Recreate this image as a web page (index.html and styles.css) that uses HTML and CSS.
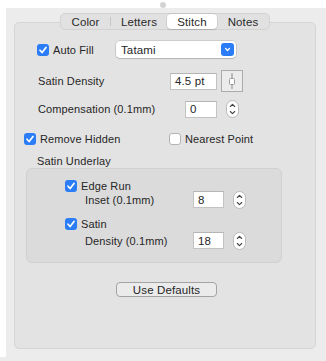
FILE: index.html
```html
<!DOCTYPE html>
<html>
<head>
<meta charset="utf-8">
<link rel="stylesheet" href="styles.css">
</head>
<body>
<div class="window">
  <div class="topbar"><span class="knob"></span></div>
  <div class="main">
    <div class="leftstrip"></div>
    <div class="content">
      <div class="tabs">
        <div class="seg seg-color">Color</div>
        <div class="sep"></div>
        <div class="seg seg-letters">Letters</div>
        <div class="seg seg-stitch active">Stitch</div>
        <div class="seg seg-notes">Notes</div>
      </div>
      <div class="box">
        <div class="row row-autofill">
          <div class="cbwrap w-autofill">
            <svg class="cb" width="12" height="12" viewBox="0 0 12 12"><rect width="12" height="12" rx="3" fill="#2b7df7"/><path d="M3 6.2 L5.1 8.5 L9 3.5" fill="none" stroke="#fff" stroke-width="1.7" stroke-linecap="round" stroke-linejoin="round"/></svg>
            <span class="lbl">Auto Fill</span>
          </div>
          <div class="popup">
            <span class="popup-text">Tatami</span>
            <span class="popup-btn"><svg width="13" height="13" viewBox="0 0 13 13"><rect width="13" height="13" rx="3" fill="#2b7df7"/><path d="M4.6 5.6 L6.5 7.4 L8.4 5.6" fill="none" stroke="#fff" stroke-width="1.4" stroke-linecap="round" stroke-linejoin="round"/></svg></span>
          </div>
        </div>

        <div class="row row-density">
          <span class="lbl lbl-density">Satin Density</span>
          <div class="field f-density">4.5 pt</div>
          <div class="slider-btn"><svg width="20" height="20" viewBox="0 0 20 20"><line x1="10" y1="2" x2="10" y2="18" stroke="#8a8a8a" stroke-width="1"/><rect x="7.5" y="7.5" width="5" height="6" rx="1" fill="#fff" stroke="#9a9a9a" stroke-width="1"/></svg></div>
        </div>

        <div class="row row-comp">
          <span class="lbl lbl-comp">Compensation (0.1mm)</span>
          <div class="field f-comp">0</div>
          <svg class="stepper st-comp" width="13" height="18" viewBox="0 0 13 18"><rect x="0.5" y="0.5" width="12" height="17" rx="6" fill="#fff" stroke="#b9b9b9"/><path d="M4.3 6.5 L6.5 4.3 L8.7 6.5" fill="none" stroke="#444" stroke-width="1.1" stroke-linecap="round" stroke-linejoin="round"/><path d="M4.3 11.5 L6.5 13.7 L8.7 11.5" fill="none" stroke="#444" stroke-width="1.1" stroke-linecap="round" stroke-linejoin="round"/></svg>
        </div>

        <div class="row row-checks">
          <div class="cbwrap w-remove">
            <svg class="cb" width="12" height="12" viewBox="0 0 12 12"><rect width="12" height="12" rx="3" fill="#2b7df7"/><path d="M3 6.2 L5.1 8.5 L9 3.5" fill="none" stroke="#fff" stroke-width="1.7" stroke-linecap="round" stroke-linejoin="round"/></svg>
            <span class="lbl">Remove Hidden</span>
          </div>
          <div class="cbwrap">
            <svg class="cb" width="12" height="12" viewBox="0 0 12 12"><rect x="0.5" y="0.5" width="11" height="11" rx="2.5" fill="#fff" stroke="#b3b3b3"/></svg>
            <span class="lbl">Nearest Point</span>
          </div>
        </div>

        <div class="underlay-label">Satin Underlay</div>

        <div class="group">
          <div class="row g-check">
            <svg class="cb" width="12" height="12" viewBox="0 0 12 12"><rect width="12" height="12" rx="3" fill="#2b7df7"/><path d="M3 6.2 L5.1 8.5 L9 3.5" fill="none" stroke="#fff" stroke-width="1.7" stroke-linecap="round" stroke-linejoin="round"/></svg>
            <span class="lbl">Edge Run</span>
          </div>
          <div class="row g-field">
            <span class="lbl g-lbl">Inset (0.1mm)</span>
            <div class="field f-small">8</div>
            <svg class="stepper" width="13" height="18" viewBox="0 0 13 18"><rect x="0.5" y="0.5" width="12" height="17" rx="6" fill="#fff" stroke="#b9b9b9"/><path d="M4.3 6.5 L6.5 4.3 L8.7 6.5" fill="none" stroke="#444" stroke-width="1.1" stroke-linecap="round" stroke-linejoin="round"/><path d="M4.3 11.5 L6.5 13.7 L8.7 11.5" fill="none" stroke="#444" stroke-width="1.1" stroke-linecap="round" stroke-linejoin="round"/></svg>
          </div>
          <div class="row g-check g-check2">
            <svg class="cb" width="12" height="12" viewBox="0 0 12 12"><rect width="12" height="12" rx="3" fill="#2b7df7"/><path d="M3 6.2 L5.1 8.5 L9 3.5" fill="none" stroke="#fff" stroke-width="1.7" stroke-linecap="round" stroke-linejoin="round"/></svg>
            <span class="lbl">Satin</span>
          </div>
          <div class="row g-field g-field2">
            <span class="lbl g-lbl">Density (0.1mm)</span>
            <div class="field f-small">18</div>
            <svg class="stepper" width="13" height="18" viewBox="0 0 13 18"><rect x="0.5" y="0.5" width="12" height="17" rx="6" fill="#fff" stroke="#b9b9b9"/><path d="M4.3 6.5 L6.5 4.3 L8.7 6.5" fill="none" stroke="#444" stroke-width="1.1" stroke-linecap="round" stroke-linejoin="round"/><path d="M4.3 11.5 L6.5 13.7 L8.7 11.5" fill="none" stroke="#444" stroke-width="1.1" stroke-linecap="round" stroke-linejoin="round"/></svg>
          </div>
        </div>

        <div class="defaults">Use Defaults</div>
      </div>
    </div>
  </div>
</div>
</body>
</html>
```

FILE: styles.css
```css
* { box-sizing: border-box; }
html, body { margin: 0; padding: 0; }
body {
  width: 326px;
  height: 361px;
  background: #ececec;
  font-family: "Liberation Sans", Arial, sans-serif;
  font-size: 11px;
  letter-spacing: 0.12px;
  color: #262626;
  overflow: hidden;
}
.window { display: flex; flex-direction: column; height: 357px; }
.topbar {
  height: 8px;
  background: #fff;
  display: flex;
  justify-content: center;
  align-items: center;
}
.knob { width: 6px; height: 6px; border-radius: 50%; background: #d3d3d3; margin-top: 1px; }
.main { flex: 1; display: flex; }
.leftstrip { width: 6px; background: #fff; }
.content { flex: 1; }

.tabs {
  position: relative;
  z-index: 2;
  margin-top: 5px;
  margin-left: 54px;
  width: 210px;
  height: 17px;
  display: flex;
  align-items: center;
  background: #e1e1e1;
  border: 1px solid #d2d2d2;
  border-radius: 5px;
}
.seg {
  height: 15px;
  display: flex;
  align-items: center;
  justify-content: center;
  font-size: 11.5px;
  color: #2a2a2a;
}
.seg-color { width: 49px; }
.sep { width: 1px; height: 9px; background: #c6c6c6; }
.seg-letters { width: 56px; }
.seg-stitch { width: 50px; }
.seg-notes { width: 52px; }
.seg.active {
  background: #fff;
  border-radius: 4px;
  box-shadow: 0 0 0 0.5px rgba(0,0,0,0.12), 0 1px 1px rgba(0,0,0,0.12);
}

.box {
  margin-top: -8px;
  margin-left: 8px;
  width: 302px;
  height: 327px;
  background: #e3e3e3;
  border: 1px solid #d5d5d5;
  border-radius: 5px;
  padding: 18px 0 0 9px;
}
.row { display: flex; align-items: center; }
.cbwrap { display: flex; align-items: center; }
.cb { flex: none; display: block; }
.lbl { white-space: nowrap; }
.cbwrap .lbl, .g-check .lbl { margin-left: 4px; }

.row-autofill { height: 17px; }
.w-autofill { width: 92px; padding-left: 13px; }
.popup {
  width: 120px;
  height: 17px;
  background: #fff;
  border-radius: 4px;
  box-shadow: 0 0 0 0.5px rgba(0,0,0,0.2), 0 1px 1px rgba(0,0,0,0.12);
  display: flex;
  align-items: center;
  justify-content: space-between;
  padding: 0 2px 0 5px;
}
.popup-text { font-size: 11.5px; }
.popup-btn { display: flex; }

.row-density { margin-top: 12px; height: 22px; }
.lbl-density { margin-left: 14px; width: 132px; }
.field {
  height: 17px;
  background: #fff;
  border: 1px solid #c3c3c3;
  border-top-color: #b5b5b5;
  display: flex;
  align-items: center;
  padding-left: 4px;
  font-size: 11.5px;
}
.f-density { width: 47px; }
.slider-btn {
  margin-left: 4px;
  width: 22px;
  height: 22px;
  border: 1px solid #ababab;
  background: #ececec;
  display: flex;
}

.row-comp { margin-top: 8px; height: 18px; }
.lbl-comp { margin-left: 14px; width: 147px; }
.f-comp { width: 32px; }
.stepper { margin-left: 9px; flex: none; display: block; }

.row-checks { margin-top: 15px; height: 12px; }
.w-remove { width: 145px; }

.underlay-label { margin-top: 10px; height: 13px; line-height: 13px; margin-left: 13px; }

.group {
  margin-left: 2px;
  width: 256px;
  height: 95px;
  background: #dbdbdb;
  border: 1px solid #d0d0d0;
  border-radius: 6px;
  padding: 11px 0 0 38px;
}
.g-check { height: 11px; }
.g-check2 { margin-top: 10px; }
.g-field { height: 17px; }
.g-field2 { margin-top: 3px; }
.g-lbl { margin-left: 20px; width: 108px; }
.f-small { width: 31px; }

.defaults {
  margin-top: 19px;
  margin-left: 92px;
  width: 101px;
  height: 15px;
  border: 1px solid #a3a3a3;
  border-radius: 4px;
  background: #ebebeb;
  display: flex;
  align-items: center;
  justify-content: center;
  font-size: 11.5px;
}
```
